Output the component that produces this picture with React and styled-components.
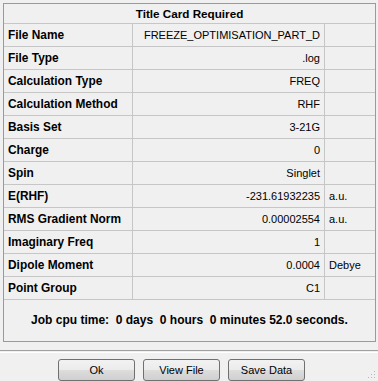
import React from 'react';
import styled, { createGlobalStyle } from 'styled-components';

const Global = createGlobalStyle`
  html, body { margin: 0; padding: 0; background: #f0f0f0; }
  body { font-family: "Liberation Sans", Arial, sans-serif; font-size: 11px; color: #000; }
`;

const Window = styled.div`
  width: 378px;
  height: 381px;
  box-sizing: border-box;
  padding: 3px 2px 0 3px;
  display: flex;
  flex-direction: column;
  position: relative;
  background: #f0f0f0;
`;

const Card = styled.div`
  height: 339px;
  box-sizing: border-box;
  border: 1px solid #9a9a9a;
  display: flex;
  flex-direction: column;
`;

const Header = styled.div`
  height: 20px;
  box-sizing: border-box;
  border-bottom: 1px solid #c6c6c6;
  display: flex;
  align-items: center;
  justify-content: center;
  font-weight: bold;
  font-size: 11.7px;
`;

const Grid = styled.div`
  display: grid;
  grid-template-columns: 129px 192px 1fr;
`;

const Cell = styled.div`
  height: 23px;
  box-sizing: border-box;
  border-bottom: 1px solid #c6c6c6;
  border-right: ${p => (p.$last ? 'none' : '1px solid #c6c6c6')};
  display: flex;
  align-items: center;
  padding: 0 4px;
  justify-content: ${p => (p.$align === 'right' ? 'flex-end' : 'flex-start')};
  font-weight: ${p => (p.$bold ? 'bold' : 'normal')};
  font-size: ${p => (p.$bold ? '11.9px' : '11px')};
  white-space: nowrap;
  overflow: hidden;
`;

const CpuTime = styled.div`
  flex: 1;
  display: flex;
  align-items: center;
  justify-content: center;
  font-weight: bold;
  font-size: 12px;
  white-space: pre;
  padding-bottom: 1px;
`;

const Separator = styled.div`
  margin: 8px -2px 0 -3px;
  height: 1px;
  border-top: 1px solid #a0a0a0;
  border-bottom: 1px solid #ffffff;
`;

const Buttons = styled.div`
  display: flex;
  gap: 8px;
  padding-left: 55px;
  margin-top: 6px;
`;

const Button = styled.button`
  width: 77px;
  height: 22px;
  box-sizing: border-box;
  border: 1px solid #707070;
  border-radius: 3px;
  background: linear-gradient(#f2f2f2 0%, #ebebeb 50%, #dddddd 51%, #cfcfcf 100%);
  font-family: "Liberation Sans", Arial, sans-serif;
  font-size: 11px;
  color: #000;
  padding: 0;
`;

const Grip = styled.svg`
  position: absolute;
  right: 2px;
  bottom: 2px;
`;

const rows = [
  ['File Name', 'FREEZE_OPTIMISATION_PART_D', ''],
  ['File Type', '.log', ''],
  ['Calculation Type', 'FREQ', ''],
  ['Calculation Method', 'RHF', ''],
  ['Basis Set', '3-21G', ''],
  ['Charge', '0', ''],
  ['Spin', 'Singlet', ''],
  ['E(RHF)', '-231.61932235', 'a.u.'],
  ['RMS Gradient Norm', '0.00002554', 'a.u.'],
  ['Imaginary Freq', '1', ''],
  ['Dipole Moment', '0.0004', 'Debye'],
  ['Point Group', 'C1', ''],
];

export default function App() {
  return (
    <Window>
      <Global />
      <Card>
        <Header>Title Card Required</Header>
        <Grid>
          {rows.map(([label, value, unit]) => (
            <React.Fragment key={label}>
              <Cell $bold>{label}</Cell>
              <Cell $align="right">{value}</Cell>
              <Cell $last>{unit}</Cell>
            </React.Fragment>
          ))}
        </Grid>
        <CpuTime>{'Job cpu time:  0 days  0 hours  0 minutes 52.0 seconds.'}</CpuTime>
      </Card>
      <Separator />
      <Buttons>
        <Button>Ok</Button>
        <Button>View File</Button>
        <Button>Save Data</Button>
      </Buttons>
      <Grip width="8" height="8" viewBox="0 0 8 8">
        <rect x="6" y="0" width="1" height="1" fill="#b8b8b8" />
        <rect x="3" y="3" width="1" height="1" fill="#b8b8b8" />
        <rect x="6" y="3" width="1" height="1" fill="#b8b8b8" />
        <rect x="0" y="6" width="1" height="1" fill="#b8b8b8" />
        <rect x="3" y="6" width="1" height="1" fill="#b8b8b8" />
        <rect x="6" y="6" width="1" height="1" fill="#b8b8b8" />
      </Grip>
    </Window>
  );
}
